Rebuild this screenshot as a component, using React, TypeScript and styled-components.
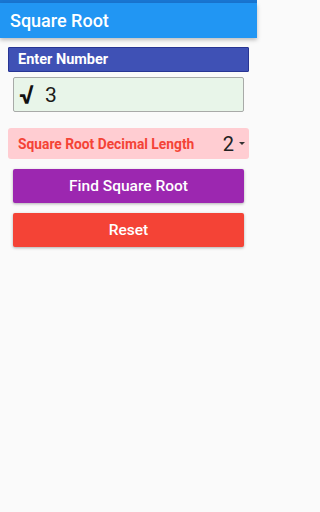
import React, { useState } from "react";
import styled, { createGlobalStyle } from "styled-components";

const GlobalStyle = createGlobalStyle`
  html, body {
    margin: 0;
    padding: 0;
    background: #fafafa;
    font-family: Roboto, "Noto Sans", sans-serif;
  }
`

const Screen = styled.div`
  width: 257px;
  min-height: 512px;
  background: #fafafa;
`

const StatusBar = styled.div`
  height: 3px;
  background: #1976d2;
`

const Toolbar = styled.div`
  height: 35px;
  background: #2196f3;
  display: flex;
  align-items: center;
  padding-left: 10px;
  box-shadow: 0 2px 4px rgba(0, 0, 0, 0.25);
  color: #fff;
  font-size: 18px;
  font-weight: 500;
`

const Content = styled.div`
  display: flex;
  flex-direction: column;
  padding: 9px 8px 0 8px;
`

const SectionHeader = styled.div`
  height: 23px;
  background: #3f51b5;
  border: 1px solid #283593;
  border-radius: 1px;
  display: flex;
  align-items: center;
  padding-left: 9px;
  color: #fff;
  font-size: 14.5px;
  font-weight: 700;
`

const InputBox = styled.div`
  margin: 5px 5px 0 5px;
  height: 33px;
  background: #e8f5e9;
  border: 1px solid #a8aaa8;
  border-radius: 2px;
  display: flex;
  align-items: center;
  padding-left: 5px;
  color: #111;
`

const RootSign = styled.span`
  font-size: 26px;
  font-weight: 700;
  width: 26px;
  line-height: 1;
`

const NumberInput = styled.input`
  border: none;
  background: transparent;
  outline: none;
  font-family: Roboto, sans-serif;
  font-size: 21px;
  color: #1a1a1a;
  width: 150px;
  padding: 0;
`

const DecimalRow = styled.div`
  margin-top: 16px;
  height: 31px;
  background: #ffcdd2;
  border-radius: 3px;
  display: flex;
  align-items: center;
  justify-content: space-between;
  padding: 0 4px 0 10px;
  color: #f44336;
  font-size: 13.8px;
  font-weight: 700;
`

const Picker = styled.div`
  display: flex;
  align-items: center;
  gap: 5px;
  color: #222;
  font-size: 20px;
  font-weight: 400;
`

const Caret = styled.span`
  width: 0;
  height: 0;
  border-left: 3px solid transparent;
  border-right: 3px solid transparent;
  border-top: 3px solid #333;
`

const ActionButton = styled.button<{ $bg: string; $top: number }>`
  margin: ${p => p.$top}px 5px 0 5px;
  height: 34px;
  border: none;
  border-radius: 2px;
  background: ${p => p.$bg};
  color: #fff;
  font-family: Roboto, sans-serif;
  font-size: 15.5px;
  font-weight: 500;
  box-shadow: 0 1px 3px rgba(0, 0, 0, 0.3);
`

export default function App() {
    const [value, setValue] = useState("3")

    return (
        <Screen>
            <GlobalStyle/>
            <StatusBar/>
            <Toolbar>Square Root</Toolbar>
            <Content>
                <SectionHeader>Enter Number</SectionHeader>
                <InputBox>
                    <RootSign>√</RootSign>
                    <NumberInput value={value} onChange={e => setValue(e.target.value)}/>
                </InputBox>
                <DecimalRow>
                    <span>Square Root Decimal Length</span>
                    <Picker>2<Caret/></Picker>
                </DecimalRow>
                <ActionButton $bg="#9c27b0" $top={10}>Find Square Root</ActionButton>
                <ActionButton $bg="#f44336" $top={10}>Reset</ActionButton>
            </Content>
        </Screen>
    )
}
